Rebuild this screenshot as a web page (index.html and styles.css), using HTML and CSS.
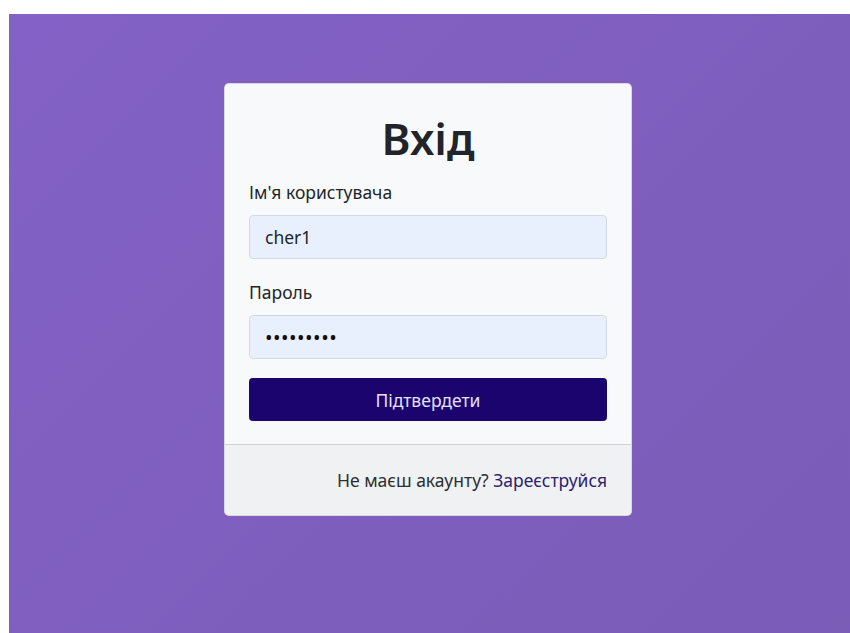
FILE: index.html
```html
<!DOCTYPE html>
<html lang="uk">
<head>
<meta charset="utf-8">
<title>Вхід</title>
<link rel="stylesheet" href="styles.css">
</head>
<body>
<main class="page">
  <form class="card">
    <div class="card-body">
      <h1 class="title">Вхід</h1>
      <label class="label" for="username">Ім'я користувача</label>
      <input class="field" id="username" type="text" value="cher1">
      <label class="label label-gap" for="password">Пароль</label>
      <input class="field" id="password" type="password" value="123456789">
      <button class="submit" type="button">Підтвердети</button>
    </div>
    <div class="card-footer">
      Не маєш акаунту? <a class="link" href="#">Зареєструйся</a>
    </div>
  </form>
</main>
</body>
</html>
```
FILE: styles.css
```css
html, body {
  margin: 0;
  padding: 0;
  background: #ffffff;
}

body {
  padding: 14px 0 0 9px;
  font-family: "Noto Sans", "Open Sans", sans-serif;
  color: #212529;
}

.page {
  min-height: 619px;
  background: linear-gradient(135deg, #8361c6 0%, #7b5cb7 100%);
  display: flex;
  justify-content: center;
  align-items: flex-start;
  padding-top: 69px;
  padding-right: 3px;
  box-sizing: border-box;
}

.card {
  width: 408px;
  background: #f8f9fa;
  border: 1px solid rgba(0, 0, 0, 0.125);
  border-radius: 5px;
  box-sizing: border-box;
  display: flex;
  flex-direction: column;
  overflow: hidden;
  margin: 0;
}

.card-body {
  padding: 24px 24px 23px;
  display: flex;
  flex-direction: column;
}

.title {
  margin: 0 0 12px;
  font-size: 44px;
  font-weight: 600;
  line-height: 60px;
  text-align: center;
  color: #212529;
}

.label {
  font-size: 17.5px;
  line-height: 24px;
  margin-bottom: 11px;
  color: #212529;
}

.label-gap {
  margin-top: 21px;
  margin-bottom: 11px;
}

.field {
  height: 44px;
  box-sizing: border-box;
  border: 1px solid #d3d9e2;
  border-radius: 4px;
  background: #e8f0fe;
  padding: 0 15px;
  font-family: inherit;
  font-size: 17.5px;
  color: #212529;
  outline: none;
}

#password {
  font-size: 20px;
  letter-spacing: 0.5px;
  color: #111111;
}

.submit {
  margin-top: 19px;
  height: 43px;
  border: 0;
  border-radius: 4px;
  background: #1b046e;
  color: #e6e1ff;
  font-family: inherit;
  font-size: 17.5px;
  cursor: pointer;
}

.card-footer {
  background: #f0f1f2;
  border-top: 1px solid rgba(0, 0, 0, 0.125);
  padding: 23px 24px 23px;
  font-size: 17.5px;
  line-height: 24px;
  text-align: right;
  color: #2b2f33;
}

.link {
  color: #2d1f6e;
  text-decoration: none;
}
```
